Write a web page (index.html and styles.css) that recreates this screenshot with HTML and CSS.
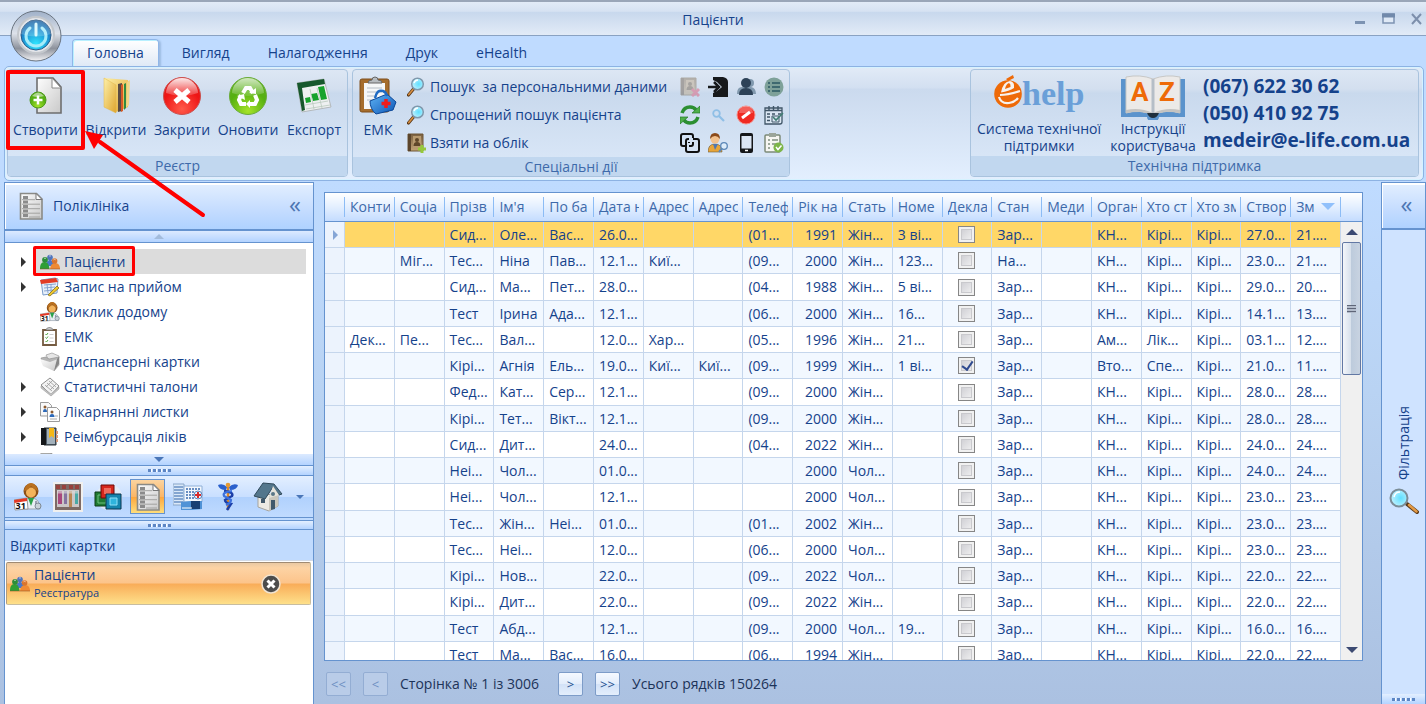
FILE: index.html
```html
<!DOCTYPE html>
<html lang="uk">
<head>
    <meta charset="UTF-8">
    <meta name="viewport" content="width=device-width, initial-scale=1.0">
    <title>Пацієнти</title>
    <link rel="stylesheet" href="styles.css">
</head>
<body>
    <svg class="sprite" aria-hidden="true">
        <defs>
            <linearGradient id="gPaper" x1="0" y1="0" x2="1" y2="1"><stop offset="0" stop-color="#fdfdfd"/><stop offset="1" stop-color="#c9c9c9"/></linearGradient>
            <linearGradient id="gFolder" x1="0" y1="0" x2="1" y2="1"><stop offset="0" stop-color="#fdf0a8"/><stop offset="1" stop-color="#dfa52e"/></linearGradient>
            <radialGradient id="gRed" cx="0.5" cy="0.85" r="0.9"><stop offset="0" stop-color="#ff5a4a"/><stop offset="0.6" stop-color="#ee1515"/><stop offset="1" stop-color="#e02020"/></radialGradient>
            <radialGradient id="gGreen" cx="0.5" cy="0.9" r="0.9"><stop offset="0" stop-color="#a6e32a"/><stop offset="0.6" stop-color="#55b010"/><stop offset="1" stop-color="#5cae1e"/></radialGradient>
            <linearGradient id="gGloss" x1="0" y1="0" x2="0" y2="1"><stop offset="0" stop-color="#fff" stop-opacity="0.9"/><stop offset="1" stop-color="#fff" stop-opacity="0.15"/></linearGradient>
            <linearGradient id="gSilver" x1="0" y1="0" x2="0" y2="1"><stop offset="0" stop-color="#9fb0c8"/><stop offset="0.45" stop-color="#dde2ea"/><stop offset="0.75" stop-color="#8d929c"/><stop offset="1" stop-color="#f4f4f6"/></linearGradient>
            <radialGradient id="gBlue" cx="0.5" cy="0.8" r="0.8"><stop offset="0" stop-color="#2fe6ff"/><stop offset="0.6" stop-color="#1c8ed0"/><stop offset="1" stop-color="#1a5c9e"/></radialGradient>
            <radialGradient id="gLens" cx="0.6" cy="0.5" r="0.6"><stop offset="0" stop-color="#5fe0ff"/><stop offset="1" stop-color="#c4f2ff"/></radialGradient>
            <linearGradient id="gBook" x1="0" y1="0" x2="0" y2="1"><stop offset="0" stop-color="#7a6040"/><stop offset="1" stop-color="#c2a577"/></linearGradient>
            <linearGradient id="gBag" x1="0" y1="0" x2="1" y2="1"><stop offset="0" stop-color="#5fb4f5"/><stop offset="1" stop-color="#0d55b5"/></linearGradient>
        </defs>
        <symbol id="people" viewBox="0 0 20 16">
            <path d="M6 12c0-4 2-6 4-6s4 2 4 6z" fill="#4a78c8"/><circle cx="10" cy="3.500" r="2.800" fill="#4f74bb"/>
            <path d="M0 15c0-4 1-7 4.500-7S9 11 9.500 15z" fill="#2f9e35"/><circle cx="5" cy="5.800" r="2.900" fill="#2b8d3a"/>
            <path d="M10 15c.5-4 2-6 5-6s5 2 5 6z" fill="#ee8a34"/><circle cx="14.600" cy="7" r="2.800" fill="#d9742c"/>
            <path d="M0 15h20" stroke="#8a4a20" stroke-opacity=".5"/>
            <path d="M4 4.500q1-1 2 0M9 2.200q1-1 2 0M13.600 5.800q1-1 2 0" stroke="#fff" stroke-opacity=".6" fill="none"/>
        </symbol>
        <symbol id="loupe" viewBox="0 0 18 20">
            <path d="M6.500 12 1.500 18" stroke="#5a3a1a" stroke-width="3.200" stroke-linecap="round"/><path d="M6 12.500 1.800 17.600" stroke="#d98f40" stroke-width="1.600" stroke-linecap="round"/>
            <circle cx="10.500" cy="7" r="5.800" fill="url(#gLens)" stroke="#7f98ac" stroke-width="1.500"/><path d="M7 6q1-3 4-3" stroke="#fff" stroke-width="1.300" fill="none"/>
        </symbol>
        <symbol id="sheet" viewBox="0 0 24 28">
            <path d="M1.500 1.500h16l5.500 5.500v20H1.500z" fill="url(#gPaper)" stroke="#8a8a86" stroke-width="1.600"/>
            <path d="M17 1.500v6h6z" fill="#fff" stroke="#777"/>
            <path d="M4 5.500h5M4 10h5M4 14.500h5M4 19h5M4 23.500h5" stroke="#8b8b8b" stroke-width="3"/>
            <path d="M3 7.700h13M3 12.200h18M3 16.700h18M3 21.200h18M10 25h11" stroke="#a2a2a0"/>
        </symbol>
        <symbol id="book" viewBox="0 0 20 20">
            <path d="M1 1h15v17H1z" fill="url(#gBook)" stroke="#6f5636"/><path d="M1 1h3v17H1z" fill="#5b452b"/><path d="M6 3h8v12H6z" fill="#b89b70"/>
            <circle cx="10" cy="7" r="2" fill="#5f4729"/><path d="M6.500 13q0-4 3.500-4t3.500 4z" fill="#5f4729"/>
        </symbol>
        <symbol id="nurse" viewBox="0 0 28 28">
            <circle cx="17" cy="8" r="7.500" fill="#8b4f17"/><circle cx="17" cy="9.500" r="5" fill="#f3b35b"/><path d="M10 8q5-1 7-5 3 4 7 5-2-8-7-8t-7 8z" fill="#b9701f"/>
            <path d="M8 26q0-11 9-11t9 11z" fill="#e8eef4" stroke="#9aa5b0"/><path d="m14 15 3 8 3-8z" fill="#2aa14a"/><path d="M22 18v4" stroke="#557" fill="none"/><circle cx="24" cy="23" r="3" fill="#c9d2da" stroke="#7d8994"/>
            <path d="m0 17 13-2 1 11-13 1z" fill="#fff" stroke="#999"/><path d="m0 17 13-2v3L.3 20z" fill="#e23a27"/>
            <text x="1.500" y="26" class="cal-day">31</text>
        </symbol>
    </svg>

    <header class="titlebar">
        <h1>Пацієнти</h1>
        <div class="window-buttons">
            <button type="button" aria-label="Згорнути"><svg width="12" height="12"><path d="M0 9.500h10" stroke="#7d93b2" stroke-width="3"/></svg></button>
            <button type="button" aria-label="Розгорнути"><svg width="14" height="12"><path d="M1 1h11v9H1z" fill="#dfe9f6" stroke="#7d93b2" stroke-width="1.500"/><path d="M0 2.500h13" stroke="#7189ab" stroke-width="4"/></svg></button>
            <button type="button" aria-label="Закрити вікно"><svg width="12" height="12"><path d="m1 1 9 10M10 1 1 11" stroke="#7d8fac" stroke-width="2"/></svg></button>
        </div>
    </header>
    <button type="button" class="orb" aria-label="Меню">
        <svg viewBox="0 0 52 52" width="52" height="52">
            <circle cx="26" cy="26" r="25" fill="url(#gSilver)" stroke="#6a7480"/>
            <circle cx="26" cy="25" r="18" fill="#e4e6ea" stroke="#c3c7cc" stroke-width="2"/>
            <circle cx="26" cy="25" r="15" fill="url(#gBlue)" stroke="#2b5c8a"/>
            <path d="M20 18a10 10 0 1 0 12 0" fill="none" stroke="#a5ecfa" stroke-width="3" stroke-linecap="round"/><path d="M26 14v11" stroke="#d5f8fd" stroke-width="3" stroke-linecap="round"/>
            <path d="M11 24a15 14 0 0 1 30 0q-15 5-30 0z" fill="#fff" opacity=".2"/>
        </svg>
    </button>

    <nav class="tabs">
        <a href="#" class="tab active">Головна</a>
        <a href="#" class="tab">Вигляд</a>
        <a href="#" class="tab">Налагодження</a>
        <a href="#" class="tab">Друк</a>
        <a href="#" class="tab">eHealth</a>
    </nav>

    <div class="ribbon">
        <section class="group group-registry">
            <div class="group-body">
                <button type="button" class="big-btn">
                    <svg viewBox="0 0 36 40" width="36" height="40"><path d="M9 2h16l8 9v26H9z" fill="url(#gPaper)" stroke="#6e6e6e" stroke-width="1.600"/><path d="M24 2v10h9z" fill="#fff" stroke="#888"/><circle cx="10" cy="24" r="8" fill="url(#gGreen)" stroke="#4d9a1c"/><path d="M4 20q6-7 12 0-6 2-12 0z" fill="#fff" opacity=".5"/><path d="M10 19.500v9M5.500 24h9" stroke="#fff" stroke-width="2.500"/></svg>
                    Створити
                </button>
                <button type="button" class="big-btn">
                    <svg viewBox="0 0 36 40" width="36" height="40"><path d="m6 2 24 2v27l-12 5-12-5z" fill="url(#gFolder)"/><path d="m20 8 4-1v28l-4 1z" fill="#5b4c43"/><path d="m23 9 2-1v27l-2 1z" fill="#d85b26"/><path d="m26 8 2-1v25l-2 2z" fill="#2f8a43"/><path d="m29 6 3-2-1 25-3 3z" fill="#f0d789"/><path d="m6 2 12 7v28L6 31z" fill="url(#gFolder)" stroke="#e0b64c" stroke-width=".5"/></svg>
                    Відкрити
                </button>
                <button type="button" class="big-btn">
                    <svg viewBox="0 0 40 40" width="40" height="40"><circle cx="20" cy="20" r="18.500" fill="url(#gRed)" stroke="#c9504e"/><path d="M4 17a16 15 0 0 1 32 0q-16 6-32 0z" fill="url(#gGloss)"/><path d="m13 14 14 12M27 14 13 26" stroke="#fff" stroke-width="5"/></svg>
                    Закрити
                </button>
                <button type="button" class="big-btn">
                    <svg viewBox="0 0 40 40" width="40" height="40"><circle cx="20" cy="20" r="18.500" fill="url(#gGreen)" stroke="#6aab3a"/><path d="M4 17a16 15 0 0 1 32 0q-16 6-32 0z" fill="url(#gGloss)" opacity=".8"/><path d="m15 17 3-5h4l3 5M27 19l2 5-2 4h-5M18 28h-5l-2-4 2-5" fill="none" stroke="#fff" stroke-width="4"/><path d="m21 17 7 1 0-6zM22 24v8l-4-4zM9 20l7-2 1 6z" fill="#fff"/></svg>
                    Оновити
                </button>
                <button type="button" class="big-btn">
                    <svg viewBox="0 0 40 40" width="40" height="40"><path d="m3 7 27-4 7 28-29 5z" fill="#eef0f1" stroke="#b3b8bb"/><path d="m3 7 27-4 1 5-23 4 3 22-3 1z" fill="#17582c"/><path d="m11 22 5-1 1 5-5 1zM17 18l6-1 2 7-6 1zM24 11l6-1 3 13-6 1z" fill="#17a32c"/><path d="m11 29 23-4M12 33l24-4M16 13l4 20M23 12l5 20" stroke="#b9c9bd" stroke-width=".8"/></svg>
                    Експорт
                </button>
            </div>
            <div class="group-label">Реєстр</div>
        </section>

        <section class="group group-special">
            <div class="group-body">
                <button type="button" class="big-btn">
                    <svg viewBox="0 0 38 40" width="38" height="40"><rect x="1" y="3" width="29" height="33" rx="2" fill="#a56d2d" stroke="#7e4f1d"/><path d="M5 7h21v26H5z" fill="#f5f7f8"/><path d="M8 12h15M8 16h15M8 20h10M8 24h8" stroke="#b4bcc4"/><path d="M9 7q0-3 4-3 0-3 3-3t3 3q4 0 4 3z" fill="#b7bcc0" stroke="#666"/><path d="m11 25 17-7 9 8-3 8-17 4q-6-5-6-13z" fill="url(#gBag)" stroke="#0b4798"/><path d="M16 22q2-9 8-7 3 1 4 5" fill="none" stroke="#1f6bc4" stroke-width="2.500"/><path d="M27 23v9M22.500 27.500h9" stroke="#ee1c1c" stroke-width="3.500"/></svg>
                    ЕМК
                </button>
                <div class="link-list">
                    <button type="button" class="row-btn"><svg width="18" height="20"><use href="#loupe"/></svg>Пошук &nbsp;за персональними даними</button>
                    <button type="button" class="row-btn"><svg width="18" height="20"><use href="#loupe"/></svg>Спрощений пошук пацієнта</button>
                    <button type="button" class="row-btn"><svg width="20" height="20" viewBox="0 0 20 20"><use href="#book" width="20" height="20"/><path d="M15 12v8M11 16h8" stroke="#95c93c" stroke-width="3"/></svg>Взяти на облік</button>
                </div>
                <div class="icon-grid">
                    <button type="button" aria-label="Зняти з обліку"><svg viewBox="0 0 20 20"><g opacity=".4"><use href="#book" width="20" height="20"/><path d="m12 12 7 7M19 12l-7 7" stroke="#e0405c" stroke-width="3"/></g></svg></button>
                    <button type="button" aria-label="Вхід"><svg viewBox="0 0 20 20"><path d="M5 0h10q5 1 5 5v15H5v-4l4-2 5-4-5-5-4-2z" fill="#17191b"/><path d="M0 10h9M6 5l5 5-5 5" fill="none" stroke="#17191b" stroke-width="2.500"/></svg></button>
                    <button type="button" aria-label="Групи"><svg viewBox="0 0 20 20"><path d="M1 17q0-7 5-7h9q5 1 5 7z" fill="#8199ae"/><circle cx="14" cy="6" r="4" fill="#8199ae"/><circle cx="10" cy="6" r="5" fill="#2d4258"/><path d="M3 18q0-7 7-7t7 7z" fill="#2d4258"/></svg></button>
                    <button type="button" aria-label="Список"><svg viewBox="0 0 20 20"><circle cx="10" cy="10" r="9.500" fill="#7ea199"/><path d="M8 6h8M8 10h8M8 14h8M4 6h2M4 10h2M4 14h2" stroke="#3f6a70" stroke-width="1.800"/></svg></button>
                    <button type="button" aria-label="Синхронізувати"><svg viewBox="0 0 20 20"><path d="M2 8q2-6 8-6 4 0 6 3M18 12q-2 6-8 6-4 0-6-3" fill="none" stroke="#2c8f31" stroke-width="3.500"/><path d="m12 8 8 0V1zM8 12H0v7z" fill="#4fb04a" stroke="#24782a" stroke-width=".7"/></svg></button>
                    <button type="button" aria-label="Знайти"><svg viewBox="0 0 20 20"><circle cx="8.500" cy="8.500" r="3.300" fill="none" stroke="#8fbfe6" stroke-width="1.800"/><path d="m11 11 5 5" stroke="#8fbfe6" stroke-width="2.200"/></svg></button>
                    <button type="button" aria-label="Заборонити"><svg viewBox="0 0 20 20"><circle cx="10" cy="10" r="9" fill="#f02a22" stroke="#f58c86"/><path d="M3 8a7 7 0 0 1 14 0z" fill="#fff" opacity=".25"/><path d="m6 13 8-6" stroke="#fff" stroke-width="3"/></svg></button>
                    <button type="button" aria-label="Календар"><svg viewBox="0 0 20 20"><path d="M1 3h17v14q0 2-2 2H1z" fill="#dbe7f3" stroke="#405668" stroke-width="1.300"/><path d="M1 5.500h17M5 1v4M9.500 1v4M14 1v4M3 9h3M3 12h3M3 15.500h3M8 9h3M14 9h3" stroke="#405668" stroke-width="1.400"/><path d="M8 11h7v6H8z" fill="none" stroke="#405668"/><path d="m9 12 3 3 7-7" fill="none" stroke="#3f7d72" stroke-width="1.600"/></svg></button>
                    <button type="button" aria-label="Копіювати"><svg viewBox="0 0 20 20"><path d="M5 13H3q-2 0-2-2V3q0-2 2-2h8q2 0 2 2v2M9 6H8Q6 6 6 8v9q0 2 2 2h9q2 0 2-2V8q0-2-2-2h-4M13 9v2q0 2-2 2H9M9 9v1" fill="none" stroke="#111" stroke-width="2"/></svg></button>
                    <button type="button" aria-label="Знайти особу"><svg viewBox="0 0 20 20"><path d="M0 19q0-8 7-8t7 8z" fill="#e7a53a" stroke="#6b5a3a" stroke-width=".6"/><path d="m5 11 2 6 3-6z" fill="#4f78b0"/><circle cx="7" cy="6" r="4.500" fill="#f2c18d"/><path d="M2 6q0-6 5-6t5 6q-2-3-5-3-3 0-5 3z" fill="#8b4a1a"/><circle cx="16" cy="13" r="3.300" fill="#dcecfa" stroke="#5b87b7" stroke-width="1.300"/><path d="m14 15-3 4" stroke="#5b87b7" stroke-width="1.800"/></svg></button>
                    <button type="button" aria-label="Телефон"><svg viewBox="0 0 20 20"><rect x="4" y="0" width="13" height="20" rx="2" fill="#15171a"/><path d="M5.500 3h10v12.500h-10z" fill="#dbe6f4"/><path d="M9 17.500h3" stroke="#fff" stroke-width="1.300"/></svg></button>
                    <button type="button" aria-label="Підтвердити"><svg viewBox="0 0 20 20"><rect x="1" y="2" width="15" height="17" rx="1" fill="#f6f6f2" stroke="#7c8a78" stroke-width="1.500"/><path d="M5 0h7v4H5z" fill="#9ba59a"/><path d="M4 7h2M4 11h2M4 15h2M8 7h6M8 11h5" stroke="#809080" stroke-width="1.500"/><circle cx="14.500" cy="14.500" r="5" fill="#7db549"/><path d="m12 14 2 2.500 3.500-4" fill="none" stroke="#fff" stroke-width="1.500"/></svg></button>
                </div>
            </div>
            <div class="group-label">Спеціальні дії</div>
        </section>

        <section class="group group-support">
            <div class="group-body">
                <button type="button" class="big-btn wrap-btn">
                    <svg viewBox="0 0 92 42" width="92" height="42"><circle cx="15" cy="20" r="13.800" fill="#ee6a08"/><path d="M8 18.500q2-11 9-11.500 5 1 4 7-5 3-13 4.500z" fill="#f7f2ee"/><path d="M12 15q1-5 4-6 2 1 1.500 4z" fill="#ee6a08"/><path d="M7 21q8 0 20-4M6 23q2 7 10 6 6-1 9-5" fill="none" stroke="#f7f2ee" stroke-width="2.200"/><path d="m13 5 7-4 1 3-6 3z" fill="#ee6a08"/><text x="29" y="31" class="logo-text">help</text></svg>
                    <span>Система технічної<br>підтримки</span>
                </button>
                <button type="button" class="big-btn wrap-btn">
                    <svg viewBox="0 0 64 46" width="64" height="46"><path d="M0 5h64v38H38a6 5 0 0 1-12 0H0z" fill="#5b93cc"/><path d="M5 3q14-3 27 2v36q-13-6-27-2z" fill="#eceae8" stroke="#c7c7c5"/><path d="M59 3q-14-3-27 2v36q13-6 27-2z" fill="#eceae8" stroke="#c7c7c5"/><path d="M32 5v35" stroke="#b5bec7" stroke-width="3"/><path d="M5 36q14-3 27 3 13-6 27-3v3q-14-4-27 2-13-6-27-2z" fill="#c4c3c1"/><path d="M26 39h12q-2 5-6 5t-6-5z" fill="#20303d"/><text x="10" y="27" class="az-text">A</text><text x="38" y="27" class="az-text">Z</text></svg>
                    <span>Інструкції<br>користувача</span>
                </button>
                <address class="phones">
                    <a href="tel:0676223062">(067) 622 30 62</a>
                    <a href="tel:0504109275">(050) 410 92 75</a>
                    <a href="mailto:medeir@e-life.com.ua">medeir@e-life.com.ua</a>
                </address>
            </div>
            <div class="group-label">Технічна підтримка</div>
        </section>
    </div>

    <main class="workspace">
        <aside class="sidebar">
            <div class="side-head">
                <svg width="24" height="28"><use href="#sheet"/></svg>
                <h2>Поліклініка</h2>
                <button type="button" class="collapse" aria-label="Згорнути панель">«</button>
            </div>
            <div class="scroll-strip"><span class="arrow-up"></span></div>
            <ul class="tree">
                <li class="has-children selected"><svg width="20" height="16"><use href="#people"/></svg><a href="#">Пацієнти</a></li>
                <li class="has-children"><svg viewBox="0 0 20 20" width="20" height="20"><path d="m1 3 14-2 3 1-1 14-14 2z" fill="#e7f0fb" stroke="#7a9ccb"/><path d="m0 3 16-2 2 4L1 7z" fill="#e23c26"/><path d="m4 8 12-1M4 11l11-1M4 14l9-1M7 7l1 9M11 7v9" stroke="#7f9ccb" stroke-width=".9"/><path d="m8 18 9-9 2 2-9 8z" fill="#efc82e" stroke="#7b6412" stroke-width=".7"/></svg><a href="#">Запис на прийом</a></li>
                <li><svg width="20" height="20"><use href="#nurse"/></svg><a href="#">Виклик додому</a></li>
                <li><svg viewBox="0 0 20 20" width="20" height="20"><path d="M3 3h13v15H3z" fill="#fff" stroke="#755c42" stroke-width="1.800"/><path d="M6 3q0-2 3-2.500h1q3 .5 3 2.500z" fill="#c8c8c8" stroke="#777" stroke-width=".7"/><path d="m5.500 7 1 1 1.500-2M5.500 10.500l1 1 1.500-2M5.500 14l1 1 1.500-2" fill="none" stroke="#4fa340"/><path d="M9.500 7.500h4M9.500 11h4M9.500 14.500h4" stroke="#ccc"/></svg><a href="#">ЕМК</a></li>
                <li><svg viewBox="0 0 20 20" width="20" height="20"><path d="m6 3 6-2 7 3v9l-5 6z" fill="#e6e6e6" stroke="#999" stroke-width=".7"/><path d="m1 6 5-1 3 2 10-2-4 12-12-5z" fill="#b5b5b5" stroke="#8a8a8a" stroke-width=".6"/><path d="m0 7 10 3 8-3-4 12-11-5z" fill="url(#gPaper)"/><path d="m14 19 5-7V5l-2 2z" fill="#858585"/></svg><a href="#">Диспансерні картки</a></li>
                <li class="has-children"><svg viewBox="0 0 20 20" width="20" height="20"><path d="m1 8 9-7 9 8-8 9z" fill="#f3f3f3" stroke="#8f8f8f"/><path d="m1 9 10 8 8-7v2l-8 7-10-8z" fill="#c4c4c4" stroke="#8f8f8f" stroke-width=".5"/><path d="m5 8 7 6M7 6l7 6M9 4l7 6M6 10l7-7M10 13l6-6" stroke="#999" stroke-width=".8"/></svg><a href="#">Статистичні талони</a></li>
                <li class="has-children"><svg viewBox="0 0 20 20" width="20" height="20"><path d="M.5.500h8l3 3V14H.5z" fill="#f8f8f8" stroke="#9b9b9b"/><path d="M7.500 5.500h9l3 3v11h-12z" fill="#fdfdfd" stroke="#9b9b9b"/><circle cx="5" cy="5" r="1.500" fill="#8a5a30"/><path d="M3 10q0-3 2-3t2 3z" fill="#2d69b8"/><circle cx="12" cy="10" r="1.500" fill="#8a5a30"/><path d="M9.500 15q0-3 2.500-3t2.500 3z" fill="#2d69b8"/><path d="M15 14h3M10 17h7" stroke="#aaa"/></svg><a href="#">Лікарнянні листки</a></li>
                <li class="has-children"><svg viewBox="0 0 20 20" width="20" height="20"><path d="M4 1h12v17H4z" fill="#53606b" stroke="#2c343b"/><path d="M1 1h5v17H1z" fill="#15181b"/><path d="M7 2h8v15H7z" fill="#a3b1bb"/><path d="M9 1h5v10l-2.500-2L9 11z" fill="#f5b716"/><path d="M17 4v3M17 8v3M17 12v3" stroke="#d99a77" stroke-width="2"/></svg><a href="#">Реімбурсація ліків</a></li>
                <li><svg width="16" height="20"><use href="#sheet"/></svg></li>
            </ul>
            <div class="scroll-strip"><span class="arrow-down"></span></div>
            <div class="splitter"></div>
            <div class="modules">
                <button type="button" aria-label="Реєстратура"><svg width="28" height="28"><use href="#nurse"/></svg></button>
                <button type="button" aria-label="Лабораторія"><svg viewBox="0 0 30 30" width="30" height="30"><path d="M0 0h30v30H0z" fill="#f1f0ee"/><path d="M3 8h24v18H3z" fill="#cbc6c6"/><path d="M2 2h26v6H2zM2 8h2v20H2zM26 8h2v20h-2zM2 25h26v3H2z" fill="#7d6a65"/><path d="M3 3h4v4H3zM9 3h4v4H9zM16 3h4v4h-4zM22 3h4v4h-4z" fill="#97423c"/><path d="M5 9h4v13H5z" fill="#a8477c"/><path d="M11 9h3v13h-3z" fill="#8574a0"/><path d="M16 9h3v16h-3z" fill="#b98652"/><path d="M22 9h3v13h-3z" fill="#49a9a6"/><path d="M4 10h22" stroke="#e0dddd" stroke-width="3" opacity=".6"/></svg></button>
                <button type="button" aria-label="Склад"><svg viewBox="0 0 28 28" width="28" height="28"><circle cx="15" cy="14" r="13" fill="#e7edf4" opacity=".8"/><path d="M1 9h14v14H1z" fill="#1f7a31" stroke="#0c3b17"/><path d="M4 12h8v8H4z" fill="none" stroke="#6fc07f"/><path d="M7 2h13v13H7z" fill="#d5261c" stroke="#6a0b08"/><path d="M10 5h7v6h-7z" fill="#ee6a5c"/><path d="M12 11h15v15H12z" fill="#1585ad" stroke="#0a3550"/><path d="M16 15h7v7h-7z" fill="#2fb4dd" stroke="#8fe0f8"/></svg></button>
                <button type="button" class="current" aria-label="Поліклініка"><svg width="24" height="28"><use href="#sheet"/></svg></button>
                <button type="button" aria-label="Стаціонар"><svg viewBox="0 0 30 28" width="30" height="28"><path d="M0 1h11v21H0z" fill="#dbe9f8" stroke="#88a5c8"/><path d="M11 3h18v16H11z" fill="#f2f7fd" stroke="#8fb0d8"/><path d="M1 4h9M1 7h9M1 10h9M1 13h9M1 16h9M1 19h9" stroke="#6a90c4" stroke-width="1.300"/><path d="M13 6h15M13 9h9M13 12h8M13 15h9" stroke="#3d6cae" stroke-width="1.700" stroke-dasharray="2 1"/><circle cx="25" cy="12" r="4" fill="#e7f0fb" stroke="#5d86bd"/><path d="M25 9v6M22 12h6" stroke="#d62b2b" stroke-width="2"/><path d="m8 19 10-1h11v8l-10 1H8z" fill="#4f92d6"/><path d="M18 18h9v8h-9z" fill="#173f74"/><path d="M9 25h10" stroke="#fff"/></svg></button>
                <button type="button" aria-label="Аптека"><svg viewBox="0 0 20 30" width="20" height="30"><path d="M10 3v25" stroke="#d9862a" stroke-width="2.500"/><path d="M9 5Q5 1 0 3q1 5 8 5zM11 5q4-4 9-2-1 5-8 5z" fill="#2a60cc"/><circle cx="10" cy="3" r="2.300" fill="#e49a34"/><path d="M6 9q10 1 8 5-4 2-7 4 0 3 6 4l-4 6" fill="none" stroke="#1c3fa8" stroke-width="2.500"/><path d="M14 9q-10 1-8 5 4 2 7 4 0 3-5 5" fill="none" stroke="#3d71dd" stroke-width="2.200"/></svg></button>
                <button type="button" aria-label="Дім"><svg viewBox="0 0 30 30" width="30" height="30"><path d="M5 13v12l11 4 9-5V12z" fill="#eceae4" stroke="#a5a39d"/><path d="M16 14v15l9-5V10z" fill="#c9c6bc"/><path d="m1 14 9-13 11 1 8 10-3 1-6-8-8 12z" fill="#53768c" stroke="#30495a"/><path d="m20 4 6 9-10 3z" fill="#e6e3da"/><path d="M18 18h4v9l-4 1zM8 17h4v4H8z" fill="#40586b"/><circle cx="20" cy="12" r="2" fill="#5a7687"/></svg></button>
                <button type="button" class="more" aria-label="Більше"><span class="arrow-down small"></span></button>
            </div>
            <div class="splitter lower"></div>
            <section class="open-cards">
                <h3>Відкриті картки</h3>
                <div class="card">
                    <svg width="20" height="16"><use href="#people"/></svg>
                    <div class="card-text"><b>Пацієнти</b><small>Реєстратура</small></div>
                    <button type="button" class="card-close" aria-label="Закрити картку"><svg viewBox="0 0 20 20" width="20" height="20"><circle cx="10" cy="10" r="9" fill="#4c4c4c" stroke="#f0e2d0" stroke-width="1.500"/><path d="m6.500 6.500 7 7M13.500 6.500l-7 7" stroke="#fff" stroke-width="3"/></svg></button>
                </div>
            </section>
        </aside>

        <section class="content">
            <div class="grid-box">
                <table class="grid">
                    <thead><tr id="gridHead"></tr></thead>
                    <tbody id="gridBody"></tbody>
                </table>
                <div class="scrollbar">
                    <div class="scroll-head"></div>
                    <div class="scroll-arrow"><span class="arrow-up dark"></span></div>
                    <div class="thumb"></div>
                    <div class="scroll-arrow last"><span class="arrow-down dark"></span></div>
                </div>
            </div>
            <div class="pager">
                <button type="button" disabled>&lt;&lt;</button>
                <button type="button" disabled>&lt;</button>
                <span>Сторінка № 1 із 3006</span>
                <button type="button">&gt;</button>
                <button type="button">&gt;&gt;</button>
                <span>Усього рядків 150264</span>
            </div>
        </section>

        <aside class="filter-panel">
            <button type="button" class="collapse" aria-label="Розгорнути фільтр">«</button>
            <button type="button" class="filter-btn">
                <span>Фільтрація</span>
                <svg viewBox="0 0 30 26" width="30" height="26"><path d="m18 16 10 8" stroke="#5a3a1a" stroke-width="4" stroke-linecap="round"/><path d="m20 17 7.500 6.500" stroke="#e39a45" stroke-width="2.500" stroke-linecap="round"/><circle cx="10" cy="10" r="8.500" fill="url(#gLens)" stroke="#7b8d97" stroke-width="2"/><path d="M5 9q1-5 6-5" stroke="#fff" stroke-width="1.500" fill="none"/></svg>
            </button>
            <div class="splitter"></div>
        </aside>
    </main>

    <div class="mark mark-create"></div>
    <div class="mark mark-patients"></div>
    <svg class="mark-arrow" width="124" height="90" viewBox="0 0 124 90"><path d="M119 86 16 13" stroke="#f00" stroke-width="4" stroke-linecap="round"/><path d="M1 2 19 6 10 20z" fill="#f00"/></svg>

    <script>
        const columns = ["Конти", "Соціа", "Прізв", "Ім'я", "По ба", "Дата н", "Адрес", "Адрес", "Телеф", "Рік на", "Стать", "Номе", "Декла", "Стан", "Меди", "Орган", "Хто ст", "Хто зм", "Створ", "Зм"];
        const rows = [
            "||Сид...|Оле...|Вас...|26.0...|||(01...|1991|Жін...|3 ві...|0|Зар...||КН...|Кірі...|Кірі...|27.0...|21....",
            "|Міг...|Тес...|Ніна|Пав...|12.1...|Киї...||(09...|2000|Жін...|123...|0|На...||КН...|Кірі...|Кірі...|23.0...|21....",
            "||Сид...|Ма...|Пет...|28.0...|||(04...|1988|Жін...|5 ві...|0|Зар...||КН...|Кірі...|Кірі...|29.0...|20....",
            "||Тест|Ірина|Ада...|12.1...|||(06...|2000|Жін...|16...|0|Зар...||КН...|Кірі...|Кірі...|14.1...|13....",
            "Дек...|Пе...|Тес...|Вал...||12.0...|Хар...||(05...|1996|Жін...|21...|0|Зар...||Ам...|Лік...|Кірі...|03.1...|12....",
            "||Кірі...|Агнія|Ель...|19.0...|Киї...|Киї...|(09...|1999|Жін...|1 ві...|1|Зар...||Вто...|Спе...|Кірі...|21.0...|11....",
            "||Фед...|Кат...|Сер...|12.1...|||(09...|2000|Жін...||0|Зар...||КН...|Кірі...|Кірі...|28.0...|28....",
            "||Кірі...|Тет...|Вікт...|12.1...|||(09...|2000|Жін...||0|Зар...||КН...|Кірі...|Кірі...|28.0...|28....",
            "||Сид...|Дит...||24.0...|||(04...|2022|Жін...||0|Зар...||КН...|Кірі...|Кірі...|24.0...|24....",
            "||Неі...|Чол...||01.0...||||2000|Чол...||0|Зар...||КН...|Кірі...|Кірі...|24.0...|24....",
            "||Неі...|Чол...||12.1...||||2000|Чол...||0|Зар...||КН...|Кірі...|Кірі...|23.0...|23....",
            "||Тес...|Жін...|Неі...|01.0...|||(01...|2002|Жін...||0|Зар...||КН...|Кірі...|Кірі...|23.0...|23....",
            "||Тес...|Неі...||12.0...|||(06...|2000|Чол...||0|Зар...||КН...|Кірі...|Кірі...|23.0...|23....",
            "||Кірі...|Нов...||22.0...|||(09...|2022|Чол...||0|Зар...||КН...|Кірі...|Кірі...|22.0...|22....",
            "||Кірі...|Дит...||22.0...|||(09...|2022|Жін...||0|Зар...||КН...|Кірі...|Кірі...|22.0...|22....",
            "||Тест|Абд...||12.1...|||(09...|2000|Чол...|19...|0|Зар...||КН...|Кірі...|Кірі...|16.0...|16....",
            "||Тест|Ма...|Вас...|16.0...|||(06...|1994|Жін...||0|Зар...||КН...|Кірі...|Кірі...|22.0...|22...."
        ];

        const head = columns.map((name, i) => `<th${i === 19 ? ' class="sorted"' : ''}><div><span>${name}</span></div></th>`).join('');
        document.getElementById('gridHead').innerHTML = '<th class="marker"><div></div></th>' + head;

        document.getElementById('gridBody').innerHTML = rows.map((row, r) => {
            const cells = row.split('|').map((value, i) => {
                if (i === 12) return `<td class="check"><input type="checkbox" aria-label="Декларація, рядок ${r + 1}"${value === '1' ? ' checked' : ''}></td>`;
                return `<td${i === 9 ? ' class="year"' : ''}>${value}</td>`;
            }).join('');
            return `<tr${r === 0 ? ' class="active"' : ''}><td class="marker"></td>${cells}</tr>`;
        }).join('');
    </script>
</body>
</html>
```
FILE: styles.css
```css
* {
    box-sizing: border-box;
}
body {
    margin: 0;
    height: 100vh;
    display: flex;
    flex-direction: column;
    overflow: hidden;
    position: relative;
    font-family: "Open Sans", "Noto Sans", sans-serif;
    font-size: 14px;
    line-height: 18px;
    color: #15428b;
    background: #bfdbff;
}
button {
    font: inherit;
    color: inherit;
    background: none;
    border: none;
    padding: 0;
}
a {
    color: inherit;
    text-decoration: none;
}
h1, h2, h3, ul {
    margin: 0;
    padding: 0;
    font-size: 14px;
    font-weight: normal;
}
svg {
    display: block;
    flex: none;
}
.sprite {
    position: absolute;
    width: 0;
    height: 0;
}
.cal-day {
    font: bold 9px "Open Sans", sans-serif;
    fill: #111;
}

/* title bar */
.titlebar {
    flex: none;
    height: 36px;
    display: grid;
    grid-template-columns: 1fr auto 1fr;
    align-items: center;
    border-top: 2px solid #9aa6b8;
    border-bottom: 1px solid #8aa2c2;
    background: linear-gradient(#e2ebf7, #d6e2f2 28%, #c8d8ed 32%, #e2ebf7);
}
.titlebar h1 {
    grid-column: 2;
    padding-top: 2px;
}
.window-buttons {
    display: flex;
    justify-content: flex-end;
    gap: 15px;
    padding-right: 3px;
}
.orb {
    position: absolute;
    left: 10px;
    top: 10px;
}

/* ribbon */
.tabs {
    flex: none;
    display: flex;
    gap: 8px;
    height: 30px;
    padding: 3px 0 0 72px;
}
.tab {
    padding: 5px 15px 0;
}
.tab.active {
    border: 1px solid #8fb6e8;
    border-bottom: none;
    border-radius: 4px 4px 0 0;
    background: linear-gradient(#fff, #dfe9f6);
    box-shadow: inset 1px 1px 0 #b8f0ff, 2px 1px 2px #9dbbe2;
    padding: 4px 14px 0;
}
.ribbon {
    flex: none;
    display: flex;
    gap: 4px;
    height: 115px;
    margin: 0 2px 1px 4px;
    padding: 2px 4px 3px 2px;
    border: 1px solid #8db2e3;
    border-radius: 5px;
    background: linear-gradient(#e2ebf7, #d3e0f1 18%, #cbdaee 20%, #e3effe);
    box-shadow: inset 0 0 0 1px #d5f2ff;
}
.group {
    display: flex;
    flex-direction: column;
    border: 1px solid #a9c3de;
    border-radius: 4px;
    background: linear-gradient(#dde7f4, #d3dfef 18%, #c9d9ed 22%, #dce9f9);
    overflow: hidden;
}
.group-body {
    flex: 1;
    display: flex;
}
.group-label {
    height: 20px;
    line-height: 20px;
    text-align: center;
    color: #3e6aaa;
    background: #c1d7ef;
}
.group-registry {
    width: 341px;
}
.group-registry .group-body {
    display: grid;
    grid-template-columns: 75px repeat(4, 1fr);
}
.group-special {
    width: 438px;
}
.group-support {
    width: 449px;
    margin-left: auto;
}
.big-btn {
    display: flex;
    flex-direction: column;
    align-items: center;
    padding-top: 6px;
    gap: 5px;
    white-space: nowrap;
}
.group-special .big-btn {
    width: 50px;
}
.link-list {
    width: 273px;
    padding: 3px 0 0 4px;
}
.row-btn {
    display: grid;
    grid-template-columns: 23px 1fr;
    align-items: center;
    height: 28px;
    text-align: left;
    white-space: nowrap;
}
.icon-grid {
    display: grid;
    grid-template-columns: repeat(4, 28px);
    grid-auto-rows: 28px;
    padding-top: 3px;
}
.icon-grid button {
    display: grid;
    place-items: center;
}
.icon-grid svg {
    width: 20px;
    height: 20px;
}
.wrap-btn {
    width: 136px;
    height: 84px;
    justify-content: space-between;
    padding-top: 4px;
    gap: 0;
    line-height: 17px;
}
.wrap-btn + .wrap-btn {
    width: 92px;
}
.logo-text {
    font: bold 34px "Liberation Serif", serif;
    fill: #6a9fd8;
}
.az-text {
    font: bold 26px Roboto, sans-serif;
    fill: #ee6a08;
}
.phones {
    display: flex;
    flex-direction: column;
    padding: 3px 0 0 4px;
    font-style: normal;
    font-weight: bold;
    font-size: 19px;
    line-height: 27px;
}

/* workspace */
.workspace {
    flex: 1;
    min-height: 0;
    display: flex;
    padding-left: 4px;
    background: linear-gradient(#bfdbff, #b9d3f3 40%, #abc1e1);
}
.sidebar {
    width: 310px;
    flex: none;
    display: flex;
    flex-direction: column;
    border: 1px solid #6593cf;
    border-bottom: none;
    background: #bfdbff;
}
.side-head {
    flex: none;
    display: flex;
    align-items: center;
    gap: 10px;
    height: 48px;
    padding: 0 12px 0 14px;
    border-bottom: 2px solid #6593cf;
    background: linear-gradient(#e3efff, #c4dcff 60%, #afd2ff);
    box-shadow: inset 1px 2px 0 #fff;
}
.collapse {
    font-size: 24px;
    line-height: 24px;
    color: #4d76b3;
    padding-bottom: 4px;
}
.side-head .collapse {
    margin-left: auto;
}
.scroll-strip {
    flex: none;
    display: grid;
    place-items: center;
    height: 12px;
    border-bottom: 1px solid #6593cf;
    background: linear-gradient(#dceaff, #b3d3ff);
}
.arrow-up, .arrow-down {
    width: 0;
    border: 5px solid transparent;
    border-top: none;
    border-bottom-color: #a3bcdc;
}
.arrow-down {
    border-top: 5px solid #4a76b8;
    border-bottom: none;
}
.arrow-up.dark {
    border-width: 6px;
    border-top: none;
    border-bottom-color: #3c4a72;
}
.arrow-down.dark {
    border-width: 6px;
    border-bottom: none;
    border-top-color: #3c4a72;
}
.arrow-down.small {
    border-width: 4px;
    border-bottom: none;
}
.tree {
    flex: none;
    height: 211px;
    overflow: hidden;
    padding: 6px 7px 0 15px;
    list-style: none;
    background: #fff;
}
.tree li {
    position: relative;
    display: flex;
    align-items: center;
    gap: 4px;
    height: 25px;
    padding-left: 20px;
}
.tree .selected {
    background: linear-gradient(90deg, transparent 15px, #dcdcdc 15px);
}
.has-children::before {
    content: "";
    position: absolute;
    left: 1px;
    border: 5px solid transparent;
    border-left-color: #333;
    border-right: none;
}
.splitter {
    flex: none;
    height: 10px;
    display: grid;
    place-items: center;
    border-bottom: 1px solid #6593cf;
    background: linear-gradient(#e3efff, #b3d3ff);
}
.splitter::before {
    content: "";
    width: 23px;
    height: 3px;
    background: repeating-linear-gradient(90deg, #5d86c4 0 3px, #fff 3px 4px, transparent 4px 5px);
}
.splitter.lower {
    margin-top: 2px;
    border-top: 1px solid #6593cf;
}
.modules {
    flex: none;
    display: flex;
    align-items: center;
    gap: 5px;
    height: 42px;
    padding: 0 8px 0 5px;
    border-bottom: 1px solid #6593cf;
    background: linear-gradient(#e3efff, #c9dfff 50%, #b0d1fd 51%, #c0dbff);
}
.modules button {
    display: grid;
    place-items: center;
    width: 35px;
    height: 35px;
}
.modules .current {
    border: 1px solid #6593cf;
    background: linear-gradient(#fbd4a0, #fbb667 50%, #fda63d 51%, #fedd7b);
}
.modules .more {
    width: 10px;
    margin-left: auto;
}
.open-cards {
    flex: 1;
    background: #fff;
}
.open-cards h3 {
    padding: 7px 5px 5px;
    background: #c1dbfe;
    border-bottom: 1px solid #d3dae6;
}
.card {
    display: flex;
    align-items: center;
    gap: 4px;
    height: 43px;
    margin: 1px 2px 1px 1px;
    padding: 0 29px 0 3px;
    border: 1px solid #b29b7c;
    border-color: #a08a72 #c8bda0 #c8bda0 #b29b7c;
    border-radius: 2px;
    background: linear-gradient(#eac9a3, #fdd3a4 12%, #fcc48b 48%, #f9ad59 52%, #fee08a);
}
.card-text {
    flex: 1;
    display: flex;
    flex-direction: column;
}
.card-text b {
    font-weight: normal;
}
.card-text small {
    font-size: 11px;
}

/* patients grid */
.content {
    flex: 1;
    min-width: 0;
    display: flex;
    flex-direction: column;
    padding: 10px 18px 0 10px;
}
.grid-box {
    flex: 1;
    min-height: 0;
    display: flex;
    overflow: hidden;
    border: 1px solid #6593cf;
    background: #fff;
}
.grid {
    flex: 1;
    width: 100%;
    min-width: 0;
    table-layout: fixed;
    border-collapse: separate;
    border-spacing: 0;
    align-self: flex-start;
}
.grid th, .grid td {
    padding: 0 0 0 5px;
    overflow: hidden;
    white-space: nowrap;
    text-align: left;
    font-weight: normal;
}
.grid th, .scroll-head {
    height: 29px;
    border-bottom: 1px solid #6593cf;
    background: linear-gradient(#fff, #e3efff 50%, #c4dcff);
}
.grid th {
    color: #3e6aaa;
}
.grid th div {
    height: 20px;
    padding-right: 4px;
    border-right: 1px solid #8cbcf5;
    line-height: 20px;
}
.grid th span {
    display: block;
    overflow: hidden;
}
.grid .marker {
    width: 20px;
    padding: 0;
}
.grid td {
    height: 26px;
    border-right: 1px solid #c5d6ec;
    border-bottom: 1px solid #c5d6ec;
    line-height: 20px;
}
.grid tr:nth-child(4n+3) td {
    height: 27px;
}
.grid tr:nth-child(even) td {
    background: #f2f8ff;
}
.grid .active td {
    background: #ffd767;
}
.grid td.marker, .grid tr:nth-child(even) td.marker {
    background: #ecf3fd;
}
.active .marker::before {
    content: "";
    display: block;
    width: 0;
    margin-left: 8px;
    border: 5px solid transparent;
    border-left-color: #86a6d6;
    border-right: none;
}
.grid .year {
    text-align: right;
    padding-right: 5px;
}
.grid .sorted {
    position: relative;
}
.sorted::after {
    content: "";
    position: absolute;
    right: 6px;
    top: 10px;
    border: 7px solid transparent;
    border-top-color: #90c0fb;
    border-bottom: none;
}
.grid .check {
    text-align: center;
    padding: 0;
}
.check input {
    appearance: none;
    display: block;
    width: 17px;
    height: 17px;
    margin: 0 auto;
    border: 1px solid #868686;
    background: linear-gradient(135deg, #c8c8ce, #f6f6f6);
    box-shadow: inset 0 0 0 2px #f1f1f1, inset 0 0 0 3px #c9c9cd;
}
.check input:checked::before {
    content: "";
    display: block;
    width: 5px;
    height: 9px;
    margin: 1px 0 0 5px;
    border: solid #2f4a8f;
    border-width: 0 2px 2px 0;
    transform: rotate(35deg);
}
.scrollbar {
    flex: none;
    width: 21px;
    display: flex;
    flex-direction: column;
    background: #f0f0f0;
}
.scroll-arrow {
    flex: none;
    height: 20px;
    display: grid;
    place-items: center;
}
.scroll-arrow.last {
    margin-top: auto;
}
.thumb {
    height: 133px;
    margin: 0 1px;
    border: 1px solid #6278a4;
    border-radius: 2px;
    background:
        repeating-linear-gradient(#5f6678 0 1px, #b3bccb 1px 3px) center / 9px 8px no-repeat,
        linear-gradient(90deg, #f3f6fa, #d8e1ec 45%, #bdcbdc 50%, #c8d3e1);
}
.pager {
    flex: none;
    display: flex;
    align-items: center;
    height: 43px;
    padding: 2px 0 0 2px;
    gap: 12px;
    color: #1c3358;
}
.pager span {
    min-width: 146px;
}
.pager button {
    width: 25px;
    height: 24px;
    border: 1px solid #7d9cc8;
    border-radius: 2px;
    color: #24508f;
    font-size: 13px;
    background: linear-gradient(#f5f9ff, #e3edfb 50%, #d3e2f7 51%, #e3eefc);
}
.pager button:disabled {
    border-color: #93add3;
    color: #6d8fc2;
    background: #b9cce8;
}

/* filter panel */
.filter-panel {
    width: 45px;
    flex: none;
    display: flex;
    flex-direction: column;
    border: 1px solid #6593cf;
    border-bottom: none;
    background: #cfe3ff;
}
.filter-panel .collapse {
    height: 47px;
    padding-left: 6px;
    border-bottom: 2px solid #6593cf;
    background: linear-gradient(#e3efff, #c4dcff 60%, #afd2ff);
    box-shadow: inset 1px 2px 0 #fff;
}
.filter-btn {
    flex: 1;
    display: flex;
    flex-direction: column;
    align-items: center;
    justify-content: flex-end;
    gap: 8px;
    padding-bottom: 180px;
}
.filter-btn span {
    writing-mode: vertical-rl;
    transform: rotate(180deg);
}
.filter-panel .splitter {
    border-bottom: none;
}

/* red marks */
.mark {
    position: absolute;
    border: 4px solid #f00;
    border-radius: 2px;
}
.mark-create {
    left: 6px;
    top: 70px;
    width: 79px;
    height: 80px;
}
.mark-patients {
    left: 33px;
    top: 246px;
    width: 102px;
    height: 30px;
    border-width: 3px;
}
.mark-arrow {
    position: absolute;
    left: 84px;
    top: 129px;
}
```
